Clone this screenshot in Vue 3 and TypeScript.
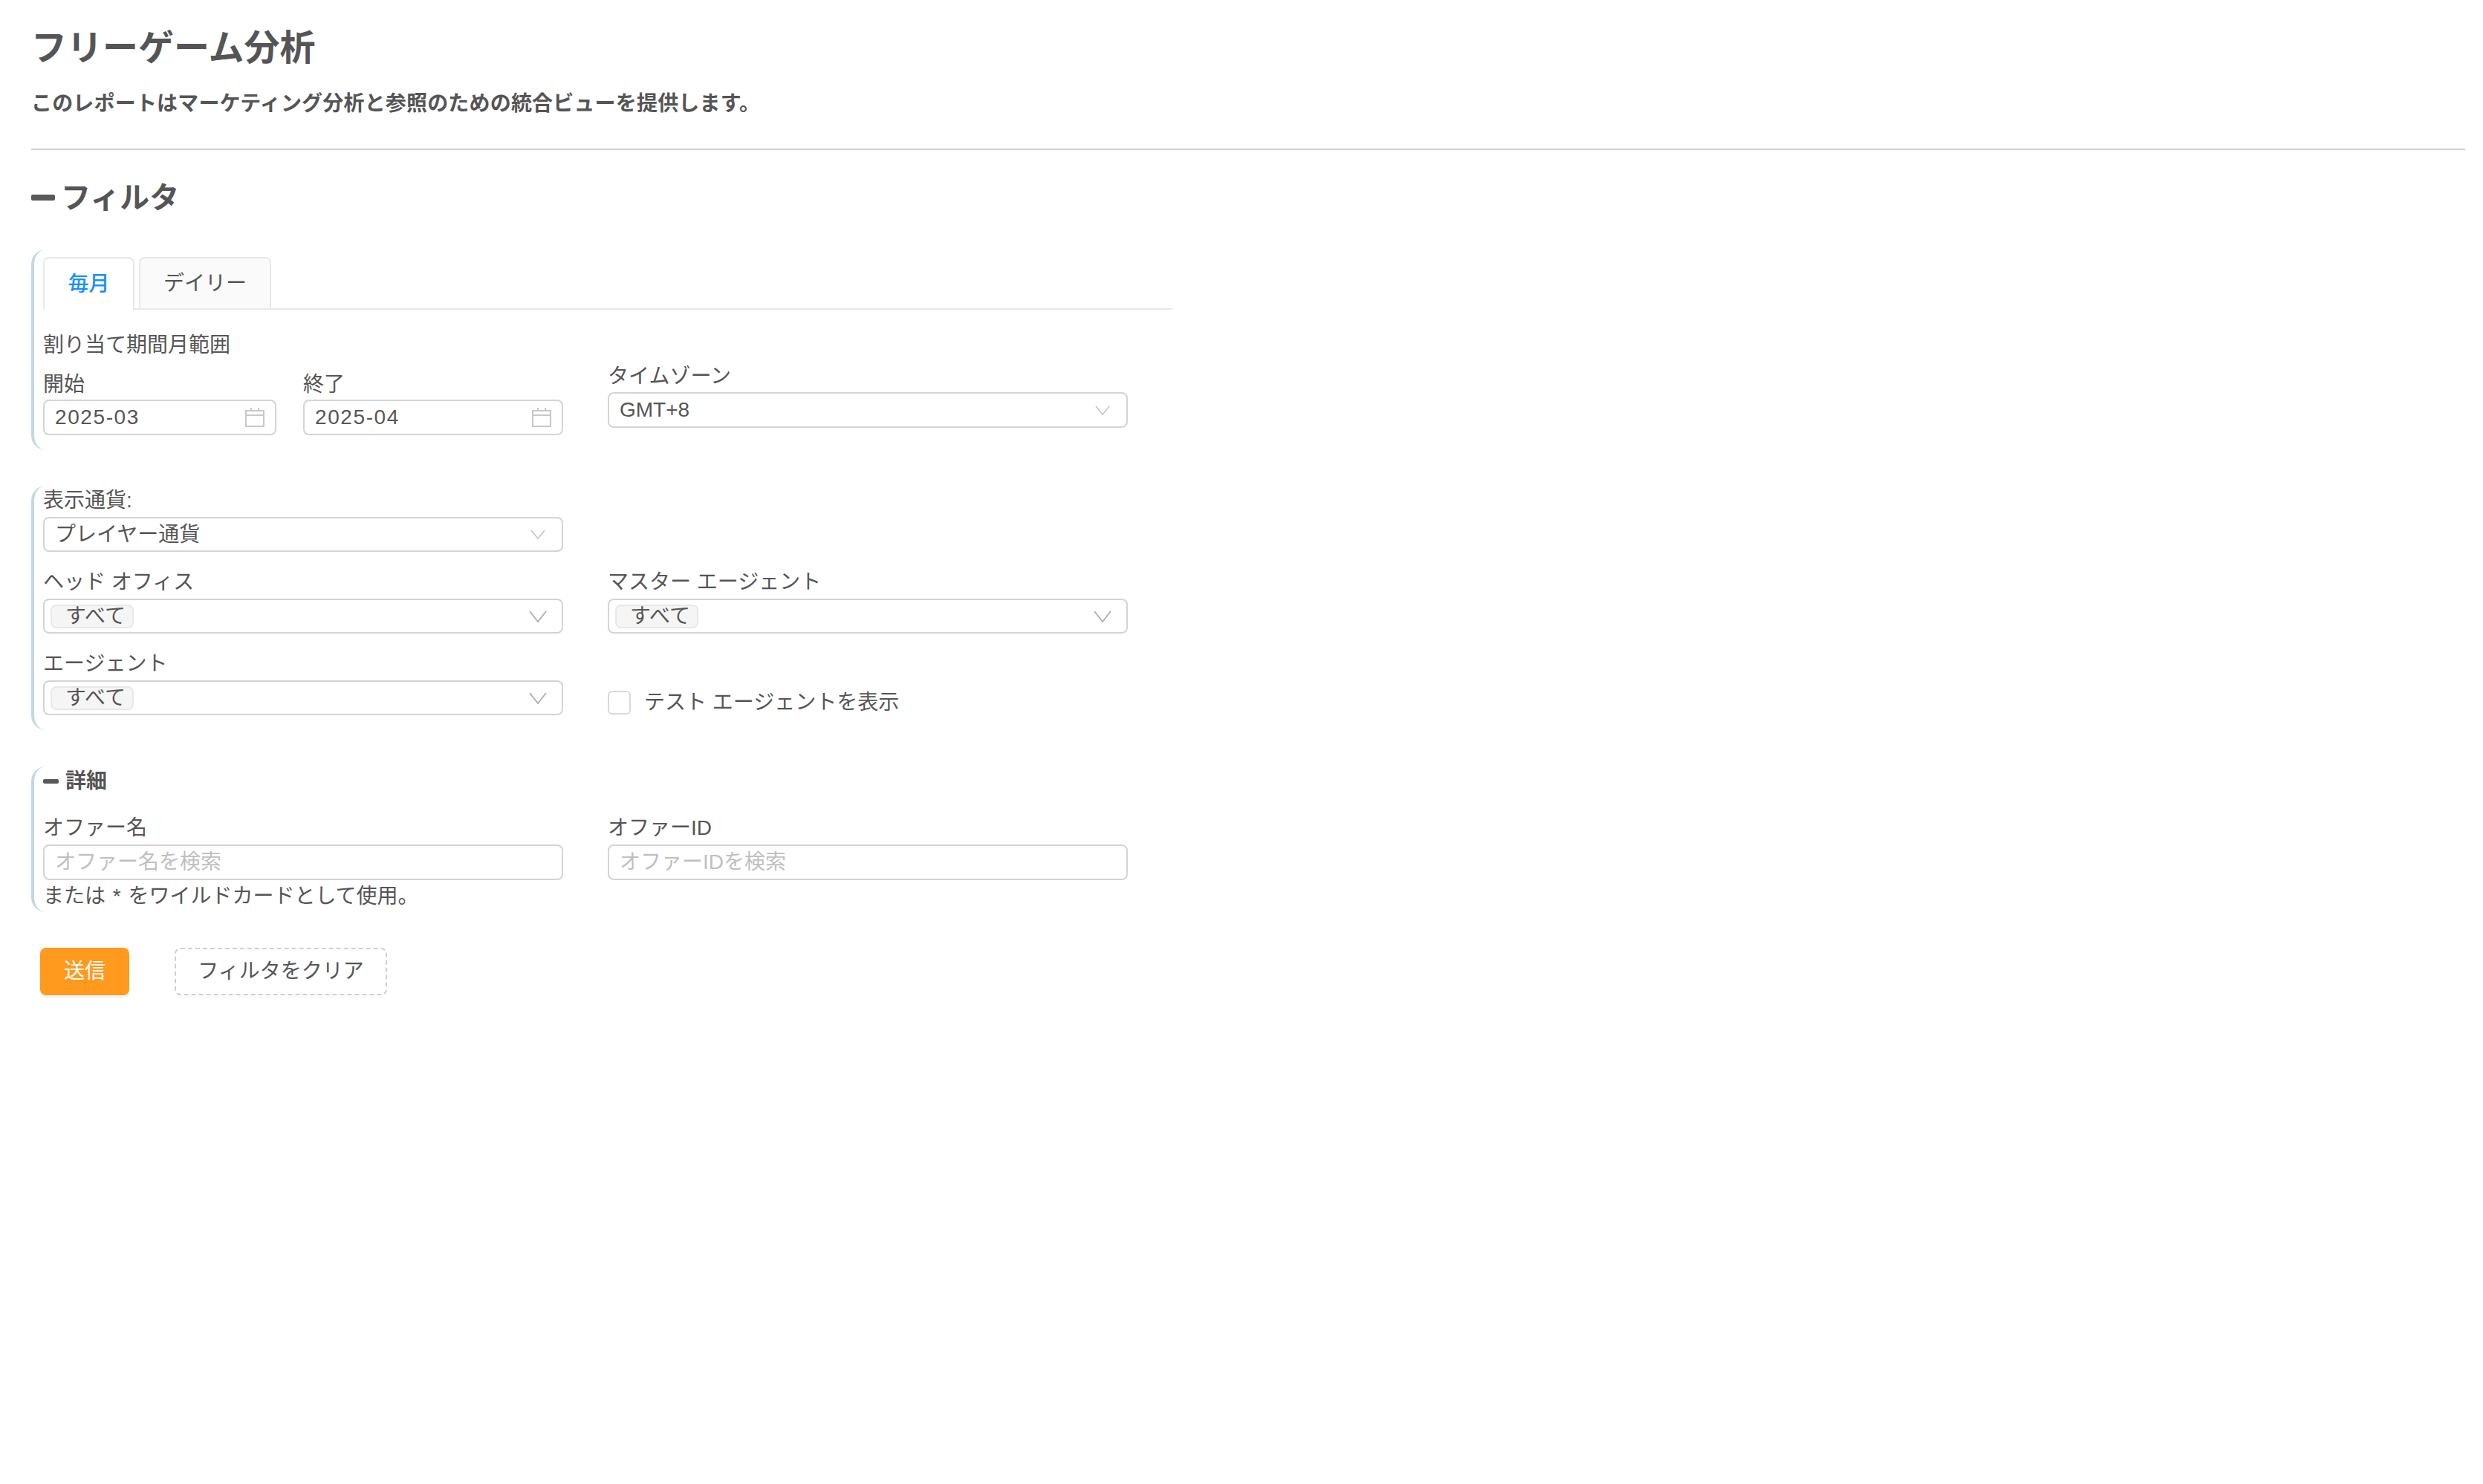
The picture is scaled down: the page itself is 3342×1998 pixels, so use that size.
<script setup lang="ts">
const timezone = 'GMT+8'
const agentFields = [
  { label: 'ヘッド オフィス', value: 'すべて' },
  { label: 'マスター エージェント', value: 'すべて' },
]
</script>

<template>
  <main class="page">
    <h1 class="title">フリーゲーム分析</h1>
    <p class="subtitle">このレポートはマーケティング分析と参照のための統合ビューを提供します。</p>
    <hr class="divider" />
    <h2 class="filter-heading"><span class="dash"></span>フィルタ</h2>

    <section class="group group-period">
      <div class="tabs">
        <button class="tab tab-active" type="button">毎月</button>
        <button class="tab" type="button">デイリー</button>
      </div>
      <div class="grid">
        <div>
          <div class="label period-label">割り当て期間月範囲</div>
          <div class="dates">
            <div class="date-start">
              <label class="label">開始</label>
              <div class="control control-input">
                <input class="native native-date" value="2025-03" readonly />
                <svg class="calendar" viewBox="0 0 26 26" fill="none" stroke="#c8c8c8" stroke-width="2">
                  <rect x="1" y="4" width="24" height="21" />
                  <path d="M1 10h24M8 0v5M18 0v5" />
                </svg>
              </div>
            </div>
            <div class="date-end">
              <label class="label">終了</label>
              <div class="control control-input">
                <input class="native native-date" value="2025-04" readonly />
                <svg class="calendar" viewBox="0 0 26 26" fill="none" stroke="#c8c8c8" stroke-width="2">
                  <rect x="1" y="4" width="24" height="21" />
                  <path d="M1 10h24M8 0v5M18 0v5" />
                </svg>
              </div>
            </div>
          </div>
        </div>
        <div class="timezone">
          <label class="label">タイムゾーン</label>
          <div class="control control-select">
            <span>{{ timezone }}</span>
            <svg class="chevron chevron-light" viewBox="0 0 20 13" fill="none" stroke="#c4c4c4" stroke-width="1.6"><path d="M1 1l9 11 9-11" /></svg>
          </div>
        </div>
      </div>
    </section>

    <section class="group group-agents">
      <div class="grid grid-rows">
        <div class="full-left">
          <label class="label">表示通貨:</label>
          <div class="control control-select">
            <span>プレイヤー通貨</span>
            <svg class="chevron chevron-light" viewBox="0 0 20 13" fill="none" stroke="#c4c4c4" stroke-width="1.6"><path d="M1 1l9 11 9-11" /></svg>
          </div>
        </div>
        <div class="spacer"></div>
        <div v-for="field in agentFields" :key="field.label">
          <label class="label">{{ field.label }}</label>
          <div class="control control-multi">
            <span class="tag">すべて</span>
            <svg class="chevron" viewBox="0 0 24 16" fill="none" stroke="#adadad" stroke-width="1.8"><path d="M1 1l11 14L23 1" /></svg>
          </div>
        </div>
        <div>
          <label class="label">エージェント</label>
          <div class="control control-multi">
            <span class="tag">すべて</span>
            <svg class="chevron" viewBox="0 0 24 16" fill="none" stroke="#adadad" stroke-width="1.8"><path d="M1 1l11 14L23 1" /></svg>
          </div>
        </div>
        <label class="check">
          <span class="box"></span>
          <span>テスト エージェントを表示</span>
        </label>
      </div>
    </section>

    <section class="group group-detail">
      <h3 class="detail-heading"><span class="dash dash-small"></span>詳細</h3>
      <div class="grid">
        <div>
          <label class="label label-gap">オファー名</label>
          <div class="control control-input">
            <input class="native" placeholder="オファー名を検索" />
          </div>
          <div class="label note">または * をワイルドカードとして使用。</div>
        </div>
        <div>
          <label class="label label-gap">オファーID</label>
          <div class="control control-input">
            <input class="native" placeholder="オファーIDを検索" />
          </div>
        </div>
      </div>
    </section>

    <div class="actions">
      <button class="btn btn-primary" type="button">送信</button>
      <button class="btn btn-dashed" type="button">フィルタをクリア</button>
    </div>
  </main>
</template>

<style>
html,
body {
  background: #fff;
}
</style>

<style scoped>
.page {
  box-sizing: border-box;
  width: 3342px;
  min-height: 1998px;
  padding: 35px 24px 0 42px;
  color: #555;
  font-family: "Liberation Sans", "Noto Sans CJK JP", sans-serif;
  font-size: 28px;
  line-height: 40px;
  background: #fff;
}
.title {
  margin: 0;
  font-size: 48px;
  line-height: 60px;
  font-weight: 700;
}
.subtitle {
  margin: 25px 0 0;
  font-size: 28px;
  line-height: 40px;
  font-weight: 700;
  letter-spacing: 0.18px;
}
.divider {
  height: 2px;
  margin: 40px 0 0;
  border: 0;
  background: #d0d0d0;
}
.filter-heading {
  display: flex;
  align-items: center;
  margin: 36px 0 0;
  font-size: 40px;
  line-height: 56px;
  font-weight: 700;
}
.dash {
  width: 32px;
  height: 8px;
  margin-right: 8px;
  border-radius: 2px;
  background: #595959;
}
.dash-small {
  width: 21px;
  height: 6px;
  margin-right: 9px;
}
.group {
  box-sizing: border-box;
  width: 1640px;
  padding-left: 12px;
  border-left: 4px solid #c3d7e3;
  border-radius: 20px;
}
.group-period {
  margin-top: 42px;
  padding-top: 10px;
  padding-bottom: 20px;
}
.group-agents {
  margin-top: 48px;
  padding-bottom: 20px;
}
.group-agents .label {
  margin-bottom: 2px;
}
.group-detail {
  margin-top: 49px;
  padding-bottom: 1px;
}
.tabs {
  display: flex;
  gap: 6px;
  width: 1520px;
  height: 71px;
  box-sizing: border-box;
  border-bottom: 2px solid #e8e8e8;
}
.tab {
  box-sizing: border-box;
  width: 178px;
  height: 69px;
  padding: 0;
  border: 2px solid #e8e8e8;
  border-bottom: 0;
  border-radius: 8px 8px 0 0;
  background: #fafafa;
  color: #555;
  font: inherit;
}
.tab-active {
  width: 123px;
  height: 71px;
  background: #fff;
  color: #1890ff;
  font-weight: 500;
}
.grid {
  display: grid;
  grid-template-columns: 700px 700px;
  column-gap: 60px;
}
.grid-rows {
  row-gap: 21px;
}
.label {
  display: block;
  height: 40px;
}
.label-gap {
  margin-bottom: 2px;
}
.note {
  margin-top: 2px;
  word-spacing: 2px;
}
.period-label {
  margin-top: 28px;
  margin-bottom: 13px;
}
.dates {
  display: flex;
  gap: 36px;
}
.date-start {
  width: 314px;
}
.date-end {
  width: 350px;
}
.timezone {
  align-self: end;
  margin-bottom: 10px;
}
.timezone .label {
  margin-bottom: 1px;
}
.timezone .control {
  height: 48px;
}
.control {
  display: flex;
  align-items: center;
  box-sizing: border-box;
  width: 100%;
  border: 2px solid #d4d4d4;
  border-radius: 8px;
  background: #fff;
}
.control-input {
  height: 48px;
  padding: 0 14px;
}
.control-select {
  height: 47px;
  padding: 0 14px;
  justify-content: space-between;
}
.control-multi {
  height: 47px;
  padding: 0 20px 0 8px;
  justify-content: space-between;
}
.native {
  flex: 1;
  min-width: 0;
  padding: 0;
  border: 0;
  outline: 0;
  background: transparent;
  color: #555;
  font: inherit;
}
.native-date {
  letter-spacing: 1.6px;
}
.native::placeholder {
  color: #bfbfbf;
  opacity: 1;
}
.calendar {
  width: 26px;
  height: 26px;
  flex: none;
}
.chevron {
  width: 24px;
  height: 16px;
  flex: none;
}
.chevron-light {
  width: 20px;
  height: 13px;
  margin-right: 8px;
}
.tag {
  box-sizing: border-box;
  width: 112px;
  height: 32px;
  padding-left: 18px;
  border: 2px solid #e8e8e8;
  border-radius: 8px;
  background: #f5f5f5;
  line-height: 27px;
}
.check {
  display: flex;
  align-items: center;
  gap: 18px;
  height: 35px;
  align-self: end;
}
.box {
  box-sizing: border-box;
  width: 31px;
  height: 32px;
  border: 2px solid #d9d9d9;
  border-radius: 6px;
  background: #fff;
}
.detail-heading {
  display: flex;
  align-items: center;
  height: 40px;
  margin: 0 0 23px;
  font-size: 28px;
  font-weight: 700;
}
.actions {
  display: flex;
  gap: 61px;
  margin: 48px 0 0 12px;
}
.btn {
  box-sizing: border-box;
  height: 64px;
  padding: 0;
  border-radius: 8px;
  font: inherit;
  box-shadow: 0 4px 0 rgba(0, 0, 0, 0.045);
}
.btn-primary {
  width: 120px;
  border: 2px solid #ff9a1f;
  background: #ff9a1f;
  color: #fff;
}
.btn-dashed {
  width: 286px;
  border: 2px dashed #d0d0d0;
  background: #fff;
  color: #555;
  box-shadow: 0 4px 0 rgba(0, 0, 0, 0.015);
}
</style>
